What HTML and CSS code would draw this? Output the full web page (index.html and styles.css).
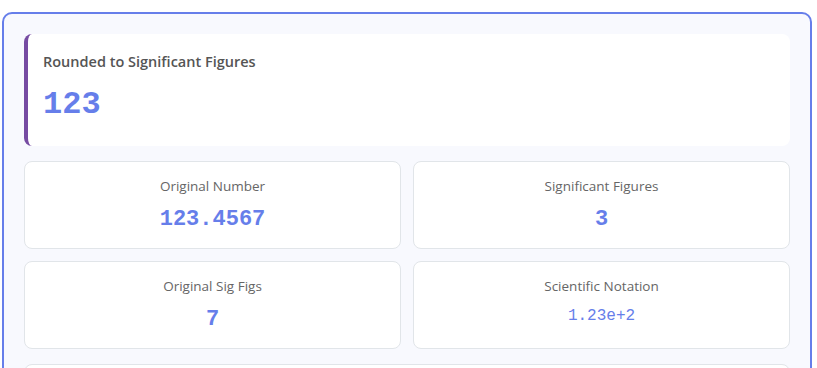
FILE: index.html
```html
<!DOCTYPE html>
<html lang="en">
<head>
    <meta charset="UTF-8">
    <meta name="viewport" content="width=device-width, initial-scale=1.0">
    <title>Significant Figures Calculator - Result</title>
    <link rel="stylesheet" href="styles.css">
</head>
<body>
    <div class="result-box">
        <div class="main-result">
            <div class="main-label">Rounded to Significant Figures</div>
            <div class="main-value">123</div>
        </div>

        <div class="stats-grid">
            <div class="stat-card">
                <div class="stat-label">Original Number</div>
                <div class="stat-value">123.4567</div>
            </div>
            <div class="stat-card">
                <div class="stat-label">Significant Figures</div>
                <div class="stat-value">3</div>
            </div>
            <div class="stat-card">
                <div class="stat-label">Original Sig Figs</div>
                <div class="stat-value">7</div>
            </div>
            <div class="stat-card">
                <div class="stat-label">Scientific Notation</div>
                <div class="stat-value small">1.23e+2</div>
            </div>
        </div>

        <div class="steps-card"></div>
    </div>
</body>
</html>
```

FILE: styles.css
```css
body {
    font-family: 'Open Sans', 'Segoe UI', Tahoma, sans-serif;
    margin: 0;
    padding: 12px 5px 0 2px;
    background: white;
}

.result-box {
    background: #f8f9fe;
    border: 2px solid #667eea;
    border-radius: 10px;
    padding: 20px;
}

.main-result {
    background: white;
    border-left: 4px solid #764ba2;
    border-radius: 8px;
    padding: 18px 15px 22px;
    margin-bottom: 15px;
}

.main-label {
    font-size: 14.5px;
    font-weight: 600;
    color: #555;
    margin-bottom: 15px;
}

.main-value {
    font-family: 'Liberation Mono', 'Courier New', monospace;
    font-size: 32px;
    font-weight: bold;
    color: #667eea;
    line-height: 1.2;
}

.stats-grid {
    display: grid;
    grid-template-columns: 1fr 1fr;
    gap: 12px;
    margin-bottom: 15px;
}

.stat-card {
    background: white;
    border: 1px solid #e1e5e9;
    border-radius: 8px;
    padding: 15px;
    height: 88px;
    box-sizing: border-box;
    text-align: center;
}

.stat-label {
    font-size: 13.5px;
    color: #666;
    margin-bottom: 12px;
}

.stat-value {
    font-family: 'Liberation Mono', 'Courier New', monospace;
    font-size: 22px;
    font-weight: bold;
    color: #667eea;
}

.stat-value.small {
    font-size: 16px;
    font-weight: normal;
}

.steps-card {
    background: white;
    border: 1px solid #e1e5e9;
    border-radius: 8px;
    height: 120px;
}
```
